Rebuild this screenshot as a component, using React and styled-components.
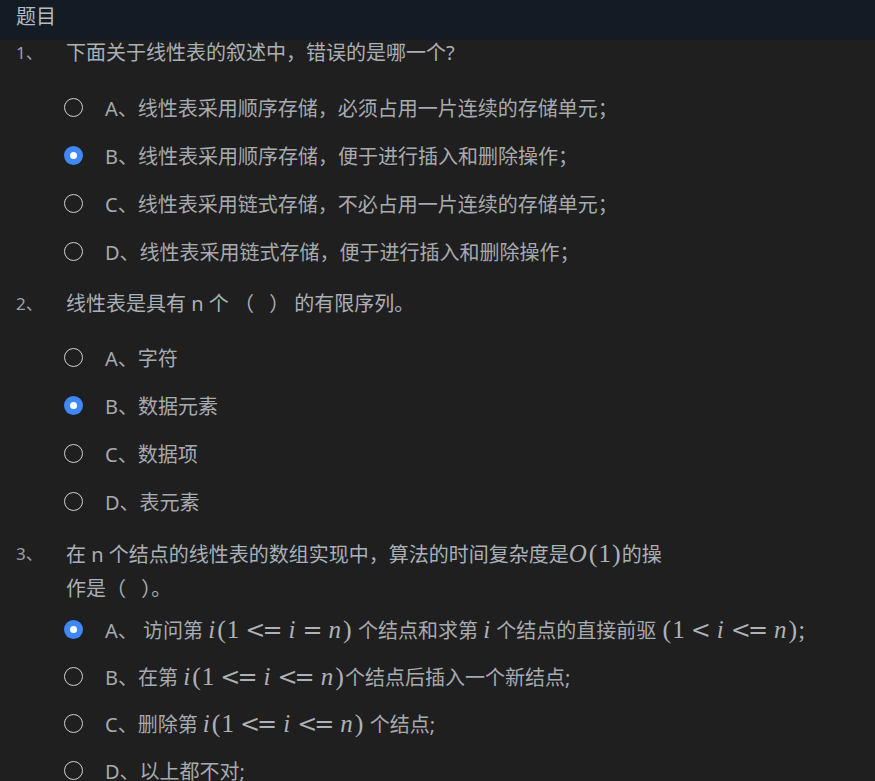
import React from "react";
import styled, { createGlobalStyle } from "styled-components";

const Global = createGlobalStyle`
  html, body { margin: 0; padding: 0; background: #1f1f1f; }
  body { font-family: "Noto Sans", "Noto Sans CJK SC", sans-serif; }
  #root { position: relative; min-height: 781px; overflow: hidden; }
`;

const Page = styled.div`
  background: #1f1f1f;
  color: #a9adb3;
  font-size: 20px;
  font-family: "Noto Sans", "Noto Sans CJK SC", sans-serif;
  min-height: 781px;
`;

const Header = styled.div`
  height: 40px;
  background: #131b25;
  padding-left: 16px;
  line-height: 34px;
  color: #b6bbc1;
  font-size: 20px;
`;

const List = styled.div`
  display: flex;
  flex-direction: column;
  margin-top: -16px;
`;

const Question = styled.div`
  padding-top: 12px;
`;

const TitleRow = styled.div`
  display: flex;
  align-items: flex-start;
  padding-left: 16px;
  line-height: 34px;
`;

const Num = styled.div`
  width: 50px;
  flex: none;
  color: #9ca2a9;
  font-size: 17px;
`;

const Title = styled.div`
  flex: 1;
  color: #aab0b7;
  white-space: nowrap;
`;

const Options = styled.div`
  display: flex;
  flex-direction: column;
  padding-left: 64px;
  margin-top: ${(p) => p.$gap}px;
`;

const OptionRow = styled.label`
  display: flex;
  align-items: center;
  height: ${(p) => p.$row}px;
  gap: 22px;
  color: #a7aaaf;
  white-space: nowrap;
`;

const Radio = styled.span`
  width: 19px;
  height: 19px;
  box-sizing: border-box;
  border-radius: 50%;
  flex: none;
  display: flex;
  align-items: center;
  justify-content: center;
  border: ${(p) => (p.$checked ? "none" : "1.6px solid #cfd2d6")};
  background: ${(p) => (p.$checked ? "#3f88f6" : "transparent")};
  &::after {
    content: "";
    display: ${(p) => (p.$checked ? "block" : "none")};
    width: 7px;
    height: 7px;
    border-radius: 50%;
    background: #ffffff;
  }
`;

const MathText = styled.span`
  font-family: "Liberation Serif", serif;
  font-size: 25px;
  color: #aeb1b6;
`;

const V = styled.i`
  font-style: italic;
  padding-right: 1px;
`;

const Paren = styled.span`
  font-size: 26px;
  padding: 0 1px;
`;

const Op = styled.span`
  font-family: "DejaVu Serif", serif;
  font-size: 24px;
  letter-spacing: -3px;
  padding: 0 9px 0 6px;
  line-height: 20px;
`;

const FloatCap = styled.div`
  position: absolute;
  left: 532px;
  top: 773px;
  width: 22px;
  height: 8px;
`;

const M = ({ children }) => <MathText>{children}</MathText>;

const Range = ({ a, b }) => (
  <M>
    <V>i</V>
    <Paren>(</Paren>1<Op>{a}</Op>
    <V>i</V>
    <Op>{b}</Op>
    <V>n</V>
    <Paren>)</Paren>
  </M>
);

const questions = [
  {
    num: "1、",
    title: "下面关于线性表的叙述中，错误的是哪一个?",
    selected: 1,
    gap: 13,
    row: 48,
    options: [
      "A、线性表采用顺序存储，必须占用一片连续的存储单元；",
      "B、线性表采用顺序存储，便于进行插入和删除操作；",
      "C、线性表采用链式存储，不必占用一片连续的存储单元；",
      "D、线性表采用链式存储，便于进行插入和删除操作；",
    ],
  },
  {
    num: "2、",
    title: "线性表是具有 n 个 （ \u2002） 的有限序列。",
    selected: 1,
    gap: 12,
    row: 48,
    options: ["A、字符", "B、数据元素", "C、数据项", "D、表元素"],
  },
  {
    num: "3、",
    title: (
      <>
        在 n 个结点的线性表的数组实现中，算法的时间复杂度是
        <M>
          <V>O</V>
          <Paren>(</Paren>1<Paren>)</Paren>
        </M>
        的操
        <br />
        作是（ {"\u2002"}）。
      </>
    ),
    selected: 0,
    gap: 0,
    row: 47,
    options: [
      <>
        A、 访问第 <Range a="<=" b="=" /> 个结点和求第 <M><V>i</V></M> 个结点的直接前驱{" "}
        <M>
          <Paren>(</Paren>1<Op>&lt;</Op>
          <V>i</V>
          <Op>&lt;=</Op>
          <V>n</V>
          <Paren>)</Paren>;
        </M>
      </>,
      <>
        B、在第 <Range a="<=" b="<=" />个结点后插入一个新结点;
      </>,
      <>
        C、删除第 <Range a="<=" b="<=" /> 个结点;
      </>,
      "D、以上都不对;",
    ],
  },
];

export default function App() {
  return (
    <Page>
      <Global />
      <Header>题目</Header>
      <List>
        {questions.map((q) => (
          <Question key={q.num}>
            <TitleRow>
              <Num>{q.num}</Num>
              <Title>{q.title}</Title>
            </TitleRow>
            <Options $gap={q.gap}>
              {q.options.map((o, i) => (
                <OptionRow key={i} $row={q.row}>
                  <Radio $checked={i === q.selected} />
                  <span>{o}</span>
                </OptionRow>
              ))}
            </Options>
          </Question>
        ))}
      </List>
      <FloatCap>
        <svg width="22" height="8" viewBox="0 0 22 8">
          <path d="M0 8 L8 1.5 Q11 -0.5 14 1.5 L22 8 Z" fill="#1e5fd6" />
        </svg>
      </FloatCap>
    </Page>
  );
}
